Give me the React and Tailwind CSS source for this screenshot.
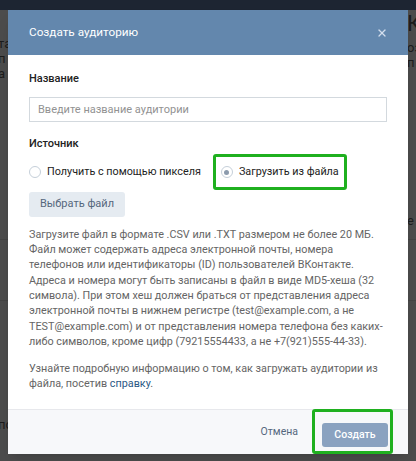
import { X } from 'lucide-react';

const FONT = { fontFamily: 'Roboto, "Open Sans", Arial, sans-serif' };

function Radio({ checked }) {
  return (
    <span className="w-[12px] h-[12px] rounded-full border border-[#c5cfd9] bg-white flex items-center justify-center shrink-0">
      {checked && <span className="w-[5px] h-[5px] rounded-full bg-[#8c9bad]" />}
    </span>
  );
}

function Backdrop() {
  return (
    <div className="w-[416px] h-[461px] bg-[#4c4c4c] text-[#1c1c1c] text-[13px]">
      <div className="h-[10px] bg-[#1d2532]" />
      <div className="flex justify-between pt-[26px]">
        <div className="leading-[15px] -ml-[2px]">
          <div>та</div>
          <div>п</div>
          <div>а т</div>
        </div>
        <div className="leading-[15px] -mt-[24px] w-[9px] overflow-hidden">
          <div className="text-[22px] leading-[24px] mb-[4px]">К</div>
          <div>оз</div>
          <div>п</div>
        </div>
      </div>
      <div className="flex justify-between mt-[130px]">
        <span />
        <span className="w-[9px] overflow-hidden">е</span>
      </div>
      <div className="border-t border-[#444] mt-[8px]" />
      <div className="border-t border-[#444] mt-[60px]" />
      <div className="flex mt-[116px] text-[13px] leading-[16px] whitespace-nowrap">
        <span className="w-[225px] -ml-[2px]">по турам в Коста-Рику ▾</span>
        <span>Туры в Коста-Рику</span>
      </div>
    </div>
  );
}

export default function App() {
  return (
    <div className="relative w-[416px] h-[461px] overflow-hidden" style={FONT}>
      <Backdrop />

      <div className="absolute left-[8px] top-[10px] w-[400px] bg-white shadow-lg">
        <div className="h-[45px] bg-[#6387ad] flex items-center justify-between pl-[21px] pr-[20px]">
          <span className="text-white text-[11.75px]">Создать аудиторию</span>
          <X size={12} strokeWidth={2.5} className="text-[#d3dded]" />
        </div>

        <div className="px-[21px] pt-[16px] pb-[17px]">
          <div className="text-[11px] leading-[16px] text-[#222] font-medium">Название</div>
          <input
            className="mt-[10px] w-full h-[25px] border border-[#d3d9de] px-[8px] text-[11px] text-[#222] placeholder:text-[#929292] outline-none"
            placeholder="Введите название аудитории"
          />

          <div className="mt-[14px] text-[11px] leading-[16px] text-[#222] font-medium">Источник</div>
          <div className="mt-[2px] flex items-center">
            <label className="flex items-center gap-[6px] text-[10.8px] text-[#222]">
              <Radio />
              Получить с помощью пикселя
            </label>
            <div className="ml-[12px] border-[3px] border-[#1fb01f] rounded-[3px] h-[36px] flex items-center px-[5px]">
              <label className="flex items-center gap-[6px] text-[10.8px] text-[#222]">
                <Radio checked />
                Загрузить из файла
              </label>
            </div>
          </div>

          <button className="h-[25px] w-[96px] bg-[#e5ebf1] text-[#55677d] text-[11px] rounded-[3px]">
            Выбрать файл
          </button>

          <p className="mt-[10px] text-[10.8px] leading-[15.3px] text-[#656565]">
            Загрузите файл в формате .CSV или .TXT размером не более 20 МБ. Файл может содержать адреса электронной почты, номера телефонов или идентификаторы (ID) пользователей ВКонтакте. Адреса и номера могут быть записаны в файл в виде MD5-хеша (32 символа). При этом хеш должен браться от представления адреса электронной почты в нижнем регистре (test@example.com, а не TEST@example.com) и от представления номера телефона без каких-либо символов, кроме цифр (79215554433, а не +7(921)555-44-33).
          </p>
          <p className="mt-[12px] text-[10.8px] leading-[15.3px] text-[#656565]">
            Узнайте подробную информацию о том, как загружать аудитории из файла, посетив <a className="text-[#2a5885]">справку</a>.
          </p>
        </div>

        <div className="h-[45px] bg-[#f7f8fa] border-t border-[#e7e8ec] flex items-center justify-end pr-[15px]">
          <span className="text-[10.5px] text-[#55677d] mr-[14px]">Отмена</span>
          <div className="border-[3px] border-[#1fb01f] rounded-[3px] pt-[9px] pb-[4px] pl-[7px] pr-[2px]">
            <button className="w-[66px] h-[24px] bg-[#8aa2c0] text-white text-[10.5px] font-medium rounded-[3px]">
              Создать
            </button>
          </div>
        </div>
      </div>
    </div>
  );
}
